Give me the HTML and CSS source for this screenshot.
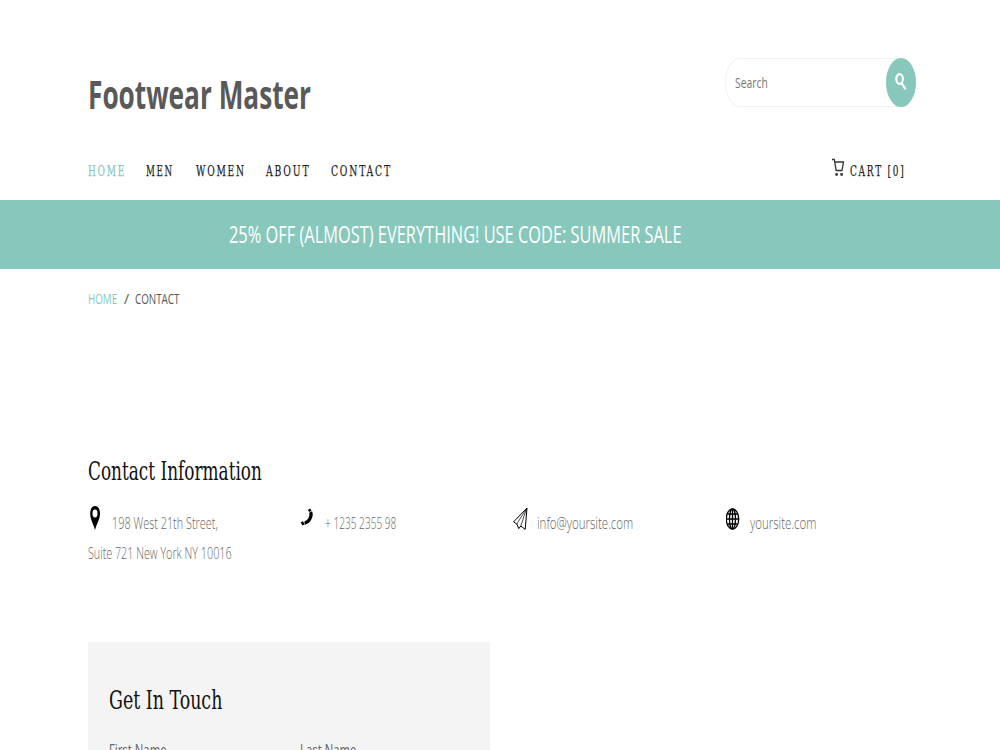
FILE: index.html
```html
<!DOCTYPE html>
<html lang="en">

<head>
    <meta charset="UTF-8">
    <title>Footwear Master</title>
    <link rel="stylesheet" href="styles.css">
</head>

<body>
    <header class="container">
        <div class="top">
            <h1 class="logo"><span>Footwear Master</span></h1>
            <form class="search">
                <span class="placeholder">Search</span>
                <button type="button" aria-label="Search">
                    <svg width="12" height="20" viewBox="0 0 12 20"><ellipse cx="4.6" cy="7" rx="3.3" ry="4.8" /><path d="M6.6 11 L10.6 17.4" /></svg>
                </button>
            </form>
        </div>
        <nav>
            <a class="home active" href="#"><span>HOME</span></a>
            <a class="men" href="#"><span>MEN</span></a>
            <a class="women" href="#"><span>WOMEN</span></a>
            <a class="about" href="#"><span>ABOUT</span></a>
            <a class="contact" href="#"><span>CONTACT</span></a>
            <a class="cart" href="#">
                <svg width="13" height="19" viewBox="0 0 13 19"><path d="M0 1.5 H2.3 L4.2 12.5 H10 L11.5 4 H2.8" /><circle cx="4.6" cy="16.5" r=".8" /><circle cx="9.6" cy="16.5" r=".8" /></svg>
                <span>CART [0]</span>
            </a>
        </nav>
    </header>

    <div class="sale"><span>25% OFF (ALMOST) EVERYTHING! USE CODE: SUMMER SALE</span></div>

    <main class="container">
        <p class="bread"><a href="#"><span>HOME</span></a><i>/</i><span>CONTACT</span></p>

        <h2 class="title"><span>Contact Information</span></h2>
        <div class="info">
            <div class="item">
                <svg class="pin" width="14" height="24" viewBox="0 0 14 24"><path fill-rule="evenodd" d="M7 0 C4 0 2.2 3.3 2.2 7.5 C2.2 13 5 17 7 24 C9 17 12 13 12 7.5 C12 3.3 10 0 7 0 Z M7 3.4 A2.5 4 0 1 1 7 11.4 A2.5 4 0 1 1 7 3.4 Z" /></svg>
                <p class="street"><span>198 West 21th Street,</span></p>
                <p class="suite"><span>Suite 721 New York NY 10016</span></p>
            </div>
            <div class="item">
                <svg class="phone" width="14" height="22" viewBox="0 0 14 22"><path class="cord" d="M9.6 6 C11.4 10 8 16.5 3.6 17.2" /><path class="ends" d="M7.6 5 L9.8 3.6 M.8 15.8 L2.6 18.8" /></svg>
                <p class="tel"><span>+ 1235 2355 98</span></p>
            </div>
            <div class="item">
                <svg class="plane" width="16" height="25" viewBox="0 0 16 25"><path d="M14 2 L.6 15.8 L3.8 18 L5.8 22.6 L7.8 20 L12.2 23.4 Z" /><path class="fold" d="M13.6 2.5 L3.8 18 M13.6 2.5 L7.8 20" /></svg>
                <p class="mail"><span>info@yoursite.com</span></p>
            </div>
            <div class="item">
                <svg class="globe" width="15" height="24" viewBox="0 0 15 24"><ellipse cx="6.5" cy="13" rx="6.2" ry="10" /><ellipse cx="6.5" cy="13" rx="3" ry="10" /><path d="M6.5 3 V23 M0 13 H13 M1.5 8 H11.5 M1.5 18 H11.5" /></svg>
                <p class="site"><span>yoursite.com</span></p>
            </div>
        </div>

        <section class="form">
            <h2 class="touch"><span>Get In Touch</span></h2>
            <div class="row">
                <label class="first"><span>First Name</span></label>
                <label class="last"><span>Last Name</span></label>
            </div>
        </section>
    </main>
</body>

</html>
```
FILE: styles.css
```css
* {
    box-sizing: border-box;
}

body {
    margin: 0;
    height: 750px;
    overflow: hidden;
    background: #fff;
    color: #666;
    font-family: "Open Sans", sans-serif;
    font-weight: 300;
}

h1, h2, p {
    margin: 0;
}

a {
    color: inherit;
    text-decoration: none;
}

/* condensed lettering */
span {
    display: inline-block;
    white-space: nowrap;
    transform-origin: 0 50%;
}

.logo span { transform: scaleX(.655); }
.search span { transform: scaleX(.69); }
.home span { transform: scaleX(.58); }
.men span { transform: scaleX(.56); }
.women span { transform: scaleX(.59); }
.about span { transform: scaleX(.6); }
.contact span { transform: scaleX(.597); }
.cart span { transform: scaleX(.58); }
.sale span { transform: scaleX(.683); }
.bread span { transform: scaleX(.7); }
.title span { transform: scaleX(.65); }
.touch span { transform: scaleX(.67); }
.street span { transform: scaleX(.64); }
.suite span { transform: scaleX(.633); }
.tel span { transform: scaleX(.595); }
.mail span,
.site span { transform: scaleX(.676); }
.row span { transform: scaleX(.71); }

svg {
    display: block;
    flex-shrink: 0;
    fill: none;
    stroke: #000;
}

.container {
    width: 828px;
    margin-left: 88px;
}

.top {
    display: flex;
    justify-content: space-between;
    height: 144px;
    padding-top: 58px;
}

.logo {
    width: 222px;
    padding-top: 9px;
    color: #595959;
    font-size: 40px;
    line-height: 54px;
    font-weight: 700;
}

.search {
    display: flex;
    justify-content: space-between;
    width: 191px;
    height: 49px;
    padding-left: 9px;
    border: 1px solid #f2f2f2;
    border-right: 0;
    border-radius: 15px / 24px;
    color: #777;
    font-size: 15px;
    line-height: 47px;
    font-weight: 400;
}

.search button {
    width: 30px;
    height: 49px;
    margin-top: -1px;
    padding: 0 0 2px 9px;
    border: 0;
    border-radius: 50%;
    background: #88c8bc;
}

.search svg {
    stroke: #fff;
    stroke-width: 2.2;
}

nav {
    display: grid;
    grid-template-columns: 58px 50px 70px 65px 501px 84px;
    height: 56px;
    color: #222;
    font-family: "DejaVu Serif", serif;
    font-size: 15.5px;
    line-height: 54px;
    letter-spacing: 3px;
    font-weight: 400;
    -webkit-text-stroke: .25px;
}

nav .active {
    color: #88c8bc;
}

.cart {
    display: flex;
    gap: 5px;
}

.cart svg {
    margin-top: 14px;
    stroke: #333;
    stroke-width: 1.3;
}

.sale {
    height: 69px;
    padding-left: 229px;
    background: #88c8bc;
    color: #fff;
    font-size: 24px;
    line-height: 68px;
    font-weight: 400;
}

.bread {
    display: flex;
    height: 180px;
    color: #555;
    font-size: 14px;
    line-height: 60px;
    font-weight: 400;
}

.bread a {
    width: 36px;
    color: #88c8bc;
}

.bread i {
    width: 11px;
    font-style: normal;
}

.title,
.touch {
    color: #111;
    font-family: "DejaVu Serif", serif;
    font-size: 26px;
    line-height: 44px;
    font-weight: 400;
}

.info {
    display: grid;
    grid-template-columns: repeat(4, 212.5px);
    height: 149px;
    padding-top: 15px;
    font-size: 17px;
    line-height: 30px;
}

.item {
    display: grid;
    grid-template-columns: 24px 1fr;
    grid-template-rows: 30px 30px;
}

.item svg {
    margin-top: -2px;
}

.item .pin {
    fill: #000;
    stroke: none;
}

.phone .cord {
    stroke-width: 3.2;
}

.phone .ends {
    stroke-width: 2.6;
}

.plane .fold {
    stroke-width: .7;
}

.globe {
    stroke-width: 1.3;
}

.suite {
    grid-column: 1 / 3;
}

.form {
    width: 402px;
    height: 108px;
    padding: 36px 21px 0;
    background: #f4f4f4;
    overflow: hidden;
}

.row {
    display: grid;
    grid-template-columns: 191px 1fr;
    padding-top: 13px;
    font-size: 16px;
    line-height: 30px;
    font-weight: 400;
}
```
